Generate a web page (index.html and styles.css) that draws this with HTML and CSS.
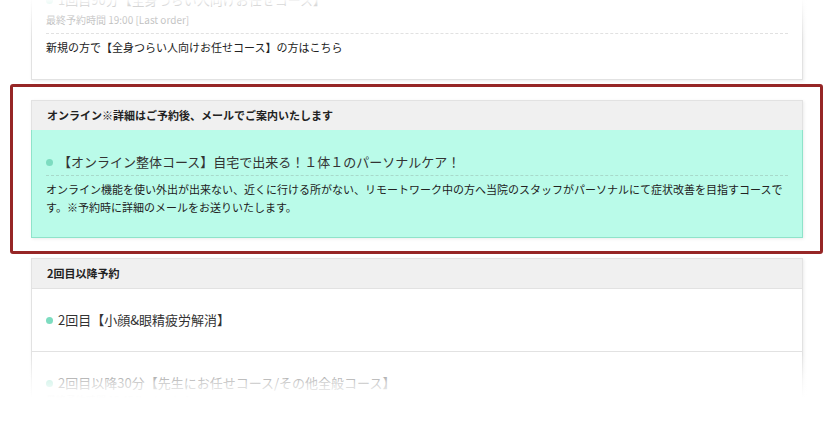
FILE: index.html
```html
<!DOCTYPE html>
<html lang="ja">
<head>
    <meta charset="UTF-8">
    <meta name="viewport" content="width=device-width, initial-scale=1.0">
    <title>予約コース一覧</title>
    <link rel="stylesheet" href="styles.css">
</head>
<body>
    <div class="page">
        <section class="card">
            <div class="course">
                <div class="course-head has-note">
                    <p class="course-title"><span class="dot"></span>1回目90分【全身つらい人向けお任せコース】</p>
                    <p class="course-time">最終予約時間 19:00 [Last order]</p>
                </div>
                <p class="course-note">新規の方で【全身つらい人向けお任せコース】の方はこちら</p>
            </div>
        </section>

        <div class="highlight">
            <section class="card">
                <h3 class="card-head">オンライン※詳細はご予約後、メールでご案内いたします</h3>
                <div class="course course-online">
                    <div class="course-head has-note">
                        <p class="course-title"><span class="dot"></span>【オンライン整体コース】自宅で出来る！１体１のパーソナルケア！</p>
                    </div>
                    <p class="course-desc">オンライン機能を使い外出が出来ない、近くに行ける所がない、リモートワーク中の方へ当院のスタッフがパーソナルにて症状改善を目指すコースです。※予約時に詳細のメールをお送りいたします。</p>
                </div>
            </section>
        </div>

        <section class="card">
            <h3 class="card-head">2回目以降予約</h3>
            <div class="course">
                <div class="course-head">
                    <p class="course-title"><span class="dot"></span>2回目【小顔&amp;眼精疲労解消】</p>
                </div>
            </div>
            <div class="course">
                <div class="course-head">
                    <p class="course-title"><span class="dot"></span>2回目以降30分【先生にお任せコース/その他全般コース】</p>
                    <p class="course-time">最終予約時間 18:45 [Last order]</p>
                </div>
            </div>
        </section>
    </div>

    <div class="fade-top"></div>
    <div class="fade-bottom"></div>
</body>
</html>
```

FILE: styles.css
```css
* {
    margin: 0;
    padding: 0;
    box-sizing: border-box;
}

body {
    font-family: "Noto Sans CJK JP", "Noto Sans", sans-serif;
    background: #fff;
    color: #222;
    overflow: hidden;
    height: 421px;
}

.page {
    width: 772px;
    margin: -32px 0 0 31px;
}

.card {
    background: #fff;
    border: 1px solid #e2e2e2;
    box-shadow: 1px 1px 3px rgba(0, 0, 0, 0.08);
}

.card-head {
    background: #f0f0f0;
    height: 30px;
    line-height: 29px;
    padding: 0 15px;
    font-size: 11px;
    font-weight: bold;
    color: #222;
    border-bottom: 1px solid #e2e2e2;
}

.course {
    padding: 21px 14px;
    border-top: 1px solid #e2e2e2;
}

.card > .course:first-child,
.card-head + .course {
    border-top: none;
}

.course-head.has-note {
    border-bottom: 1px dashed #dcdcdc;
}

.course-title {
    display: flex;
    align-items: center;
    font-size: 13px;
    line-height: 20px;
    color: #333;
}

.has-note .course-title {
    padding-bottom: 3px;
}

.dot {
    width: 7px;
    height: 7px;
    border-radius: 50%;
    background: #7ddcc0;
    margin-right: 5px;
    flex-shrink: 0;
}

.course-time {
    font-size: 10px;
    line-height: 14px;
    color: #999;
    padding-bottom: 6px;
}

.course-note {
    font-size: 11px;
    line-height: 18px;
    padding-top: 4px;
    padding-bottom: 2px;
}

.highlight {
    margin: 4px -20px 4px -21px;
    border: 3px solid #962626;
    border-radius: 3px;
    padding: 13px 17px 13px 18px;
}

.course-online {
    background: #bafbe9;
    border: 1px solid #8fe3ca;
    margin: -1px -1px -1px;
    padding: 22px 14px 21px;
}

.course-online .course-head.has-note {
    border-bottom-color: #a8d9ca;
}

.course-desc {
    font-size: 11px;
    line-height: 18px;
    margin-top: 4px;
}

.fade-top {
    position: absolute;
    left: 0;
    top: 0;
    width: 100%;
    height: 40px;
    background: linear-gradient(rgba(255, 255, 255, 0.95), rgba(255, 255, 255, 0.45) 20px, rgba(255, 255, 255, 0));
}

.fade-bottom {
    position: absolute;
    left: 0;
    top: 354px;
    width: 100%;
    height: 67px;
    background: linear-gradient(rgba(255, 255, 255, 0), rgba(255, 255, 255, 0.75) 28px, #fff 44px);
}
```
